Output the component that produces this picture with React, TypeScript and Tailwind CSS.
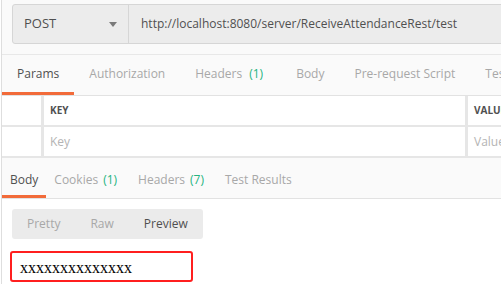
import React from 'react';

const requestTabs = [
    { label: 'Params', active: true },
    { label: 'Authorization' },
    { label: 'Headers', count: '(1)' },
    { label: 'Body' },
    { label: 'Pre-request Script' },
    { label: 'Tests' },
];

const responseTabs = [
    { label: 'Body', active: true },
    { label: 'Cookies', count: '(1)' },
    { label: 'Headers', count: '(7)' },
    { label: 'Test Results' },
];

const App: React.FC = () => {
    return (
        <div className="w-[501px] h-[284px] overflow-hidden bg-white flex font-['Open_Sans',sans-serif] text-[12px]">
            <div className="w-[2px] shrink-0 bg-white border-r border-[#dedede]" />
            <div className="flex-1 min-w-0 flex flex-col bg-[#fafafa]">
                {/* URL bar */}
                <div className="pt-[4px] pl-[10px] pb-[10px] border-b border-[#e8e8e8]">
                    <div className="flex h-[40px] w-[600px] bg-[#ececec] border border-[#d6d6d6] rounded-l-[3px]">
                        <div className="w-[116px] shrink-0 flex items-center justify-between pl-[11px] pr-[11px] border-r border-[#d6d6d6] text-[#505050] text-[13px]">
                            <span>POST</span>
                            <svg width="8" height="5" viewBox="0 0 8 5">
                                <path d="M0 0 L8 0 L4 5 Z" fill="#7a7a7a" />
                            </svg>
                        </div>
                        <div className="flex items-center pl-[12px] text-[#505050] whitespace-nowrap">
                            http://localhost:8080/server/ReceiveAttendanceRest/test
                        </div>
                    </div>
                </div>

                {/* Request tabs */}
                <div className="flex h-[41px] border-b border-[#e2e2e2] whitespace-nowrap">
                    {requestTabs.map((t) => (
                        <div
                            key={t.label}
                            className={`shrink-0 flex items-center px-[15px] border-b-[3px] ${t.active ? 'border-[#f26b3a] text-[#505050]' : 'border-transparent text-[#a8a8a8]'}`}
                        >
                            {t.label}
                            {t.count && <span className="ml-[7px] mr-[3px] text-[#26b47f]">{t.count}</span>}
                        </div>
                    ))}
                </div>

                {/* Params table */}
                <div className="flex flex-col bg-white border-b-[2px] border-[#e6e6e6]">
                    <div className="flex h-[31px] border-b-[2px] border-[#e6e6e6]">
                        <div className="w-[42px] shrink-0 border-r-[3px] border-[#e6e6e6]" />
                        <div className="w-[424px] shrink-0 flex items-center pl-[6px] text-[10px] font-bold text-[#505050] border-r-[3px] border-[#e6e6e6]">
                            KEY
                        </div>
                        <div className="flex items-center pl-[6px] text-[10px] font-bold text-[#505050]">VALUE</div>
                    </div>
                    <div className="flex h-[29px]">
                        <div className="w-[42px] shrink-0 border-r-[3px] border-[#e6e6e6]" />
                        <div className="w-[424px] shrink-0 flex items-center pl-[6px] text-[#b4b4b4] border-r-[3px] border-[#e6e6e6]">
                            Key
                        </div>
                        <div className="flex items-center pl-[6px] text-[#b4b4b4]">Value</div>
                    </div>
                </div>

                {/* Response tabs */}
                <div className="flex h-[41px] pt-[6px] border-b border-[#e2e2e2] whitespace-nowrap">
                    {responseTabs.map((t) => (
                        <div
                            key={t.label}
                            className={`shrink-0 flex items-center px-[8px] border-b-[3px] ${t.active ? 'border-[#f26b3a] text-[#505050]' : 'border-transparent text-[#a8a8a8]'}`}
                        >
                            {t.label}
                            {t.count && <span className="ml-[5px] mr-[5px] text-[#26b47f]">{t.count}</span>}
                        </div>
                    ))}
                </div>

                {/* Response body */}
                <div className="flex-1 bg-white pt-[10px] pl-[10px]">
                    <div className="inline-flex h-[30px] bg-[#ebebeb] rounded-[3px]">
                        <div className="flex items-center px-[15px] text-[#a8a8a8]">Pretty</div>
                        <div className="flex items-center px-[15px] text-[#a8a8a8]">Raw</div>
                        <div className="flex items-center px-[15px] text-[#505050]">Preview</div>
                    </div>
                    <div className="mt-[12px] ml-[-2px] w-[183px] h-[31px] border-[2px] border-[#ff1f1f] rounded-[3px] flex items-center pl-[8px] pt-[3px] font-['Liberation_Serif',serif] text-[16px] text-black">
                        xxxxxxxxxxxxxx
                    </div>
                </div>
            </div>
        </div>
    );
};

export default App;
